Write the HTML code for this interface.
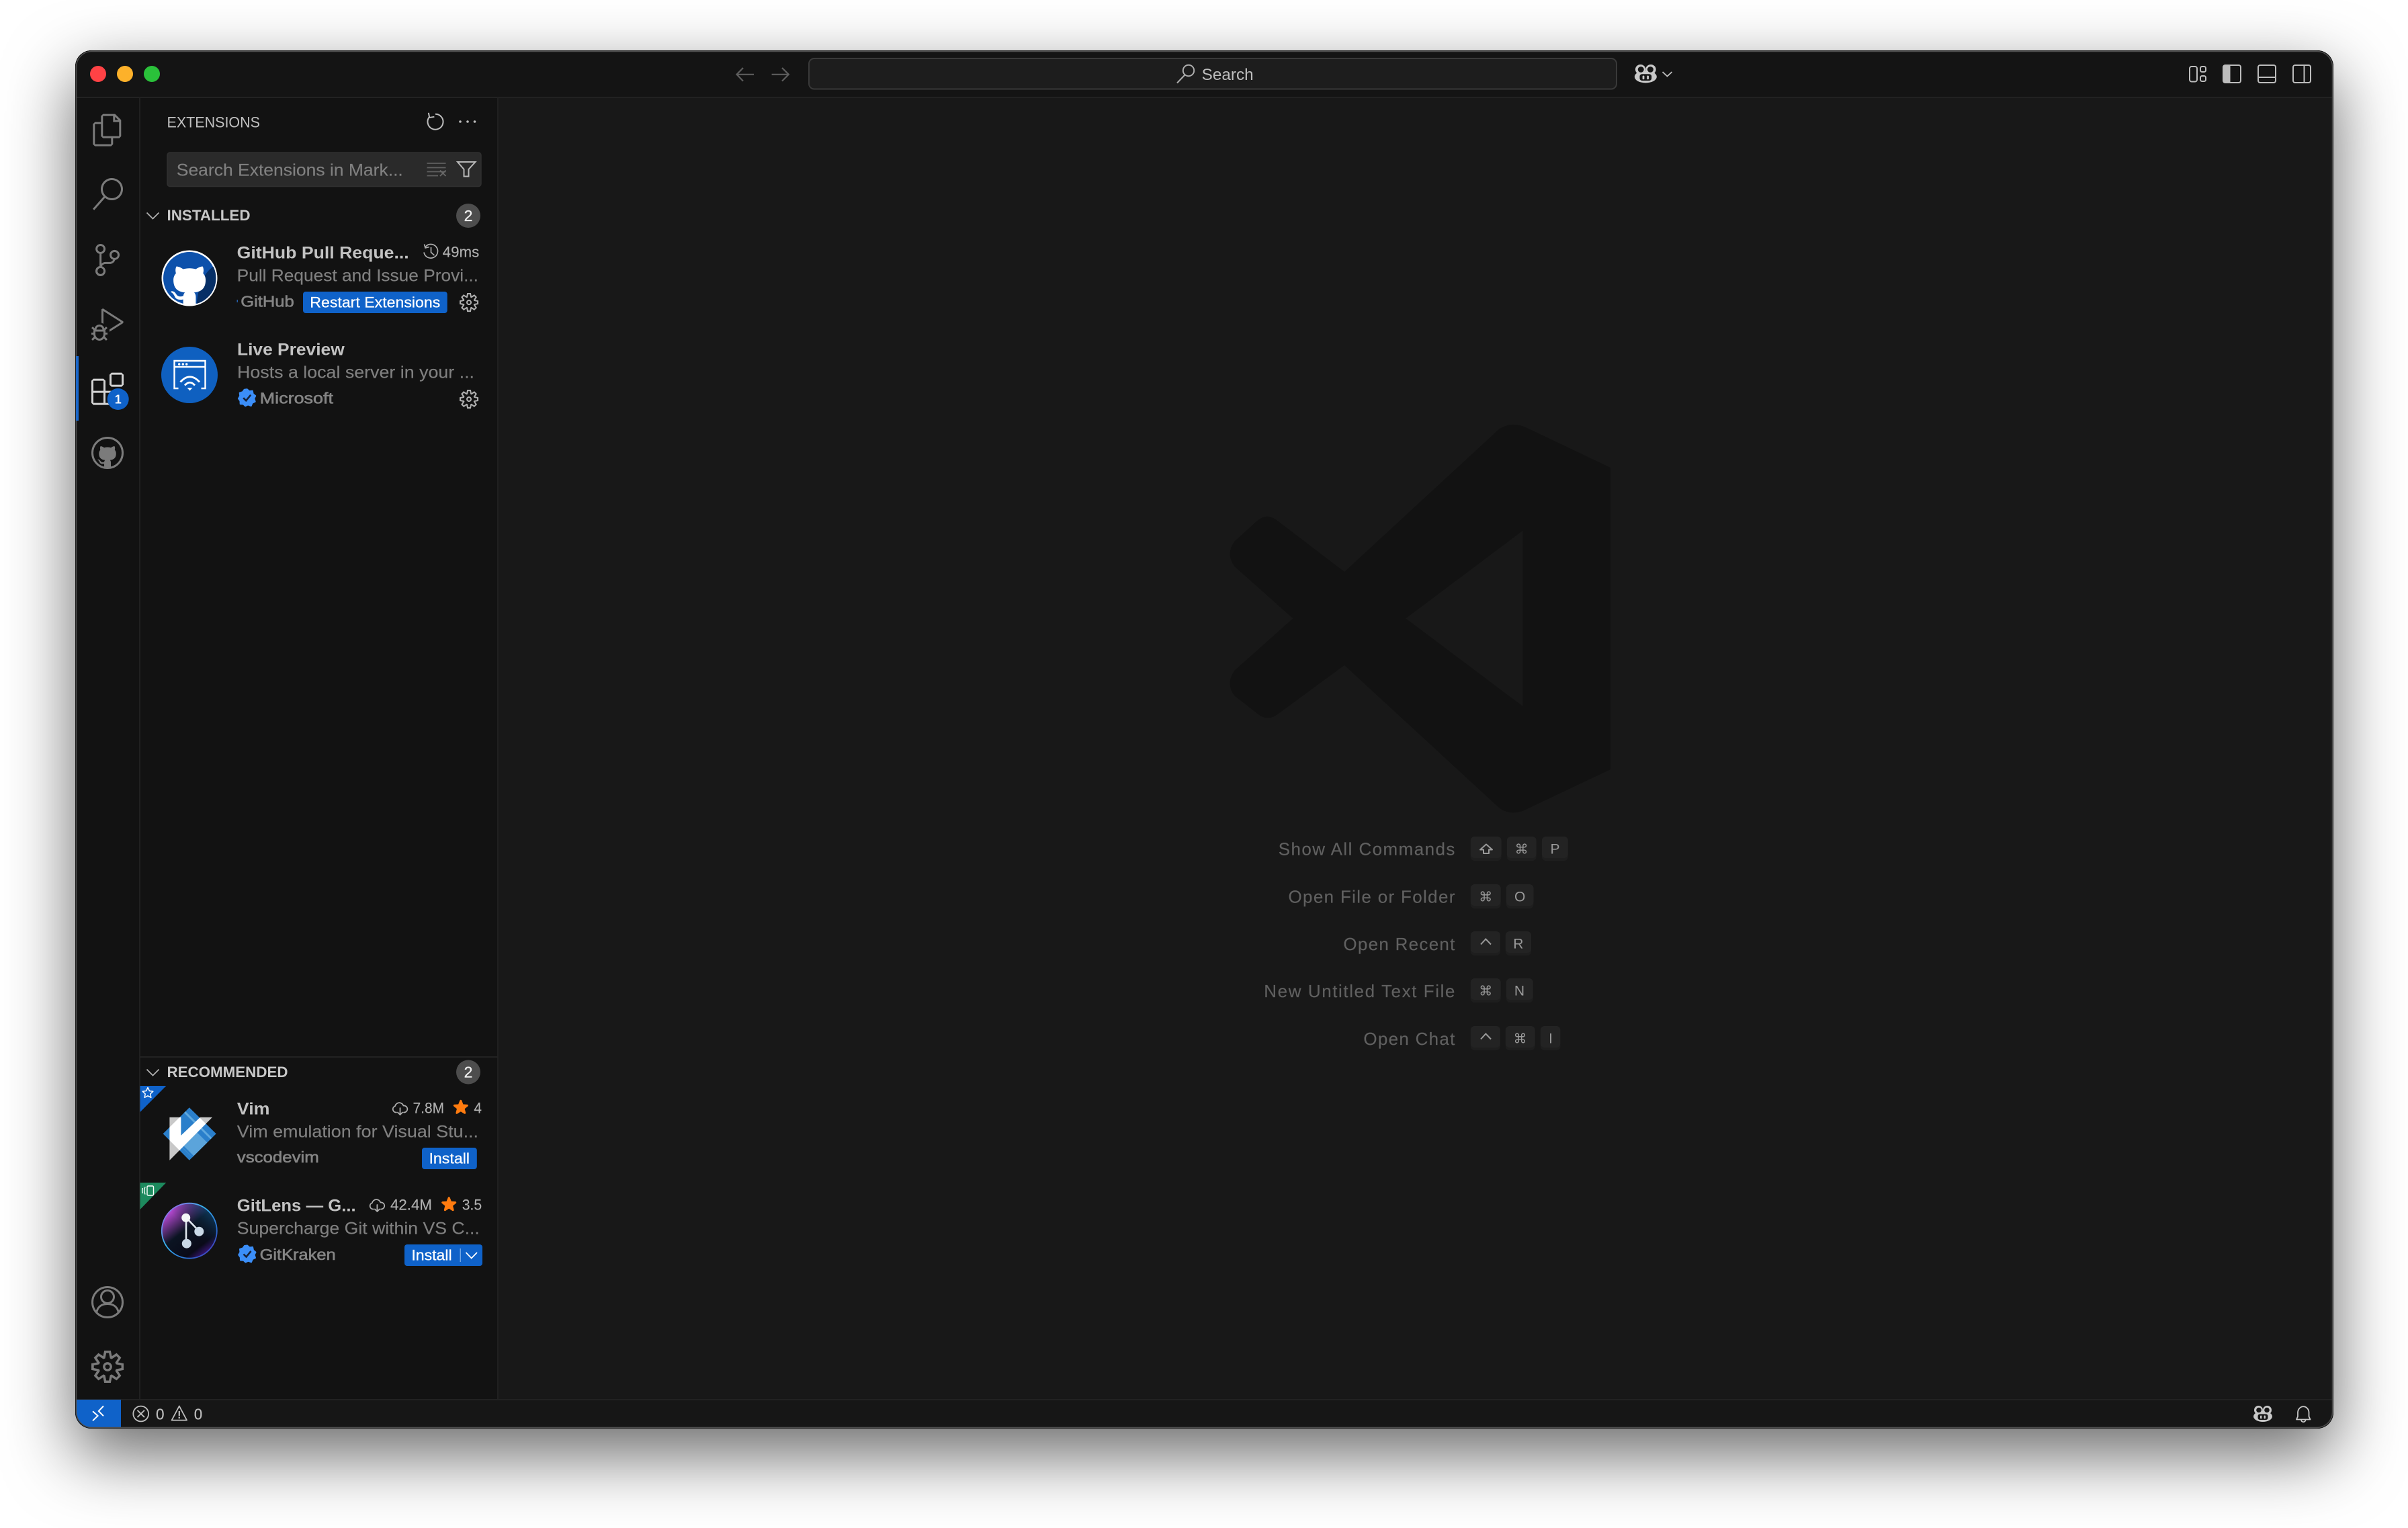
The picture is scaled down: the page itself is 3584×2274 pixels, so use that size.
<!DOCTYPE html>
<html lang="en">
<head>
<meta charset="utf-8">
<title>Visual Studio Code</title>
<style>
html,body{margin:0;padding:0;background:#fff;width:3584px;height:2274px;overflow:hidden}
#sh{position:absolute;left:112px;top:75px;width:3361px;height:2051px;border-radius:24px;box-shadow:0 38px 100px 2px rgba(0,0,0,.58)}
svg{position:absolute;left:0;top:0}
text{font-family:"Liberation Sans",sans-serif;white-space:pre}
.t{font-size:25px;font-weight:700;fill:#c2c2c2}
.d{font-size:25px;fill:#808080;stroke:#808080;stroke-width:.15}
.a{font-size:23px;fill:#858585;stroke:#858585;stroke-width:.6}
.m{font-size:22px;fill:#b0b0b0;stroke:#b0b0b0;stroke-width:.15}
.b{font-size:22px;fill:#fff;stroke:#fff;stroke-width:.25}
.h{font-size:22px;font-weight:700;fill:#c8c8c8}
.l{font-size:26px;fill:#606060;stroke:#606060;stroke-width:.15}
.k{font-size:21px;fill:#9a9a9a;text-anchor:middle}
.c{font-family:"DejaVu Sans",sans-serif;font-size:20px;fill:#9a9a9a;text-anchor:middle}
</style>
</head>
<body>
<div id="sh"></div>
<svg width="3584" height="2274" viewBox="0 0 3584 2274" xmlns="http://www.w3.org/2000/svg">
<defs>
<clipPath id="win"><rect x="112" y="75" width="3361" height="2051" rx="24"/></clipPath>
<clipPath id="gh"><circle cx="282" cy="414" r="39.5"/></clipPath>
<clipPath id="gh2"><circle cx="160" cy="675" r="22.5"/></clipPath>
<clipPath id="dia"><polygon points="281.8,1648.3 321.7,1687.3 281.8,1726.7 242.6,1687.3"/></clipPath>
<linearGradient id="gl" x1="0.15" y1="0.05" x2="0.85" y2="0.95"><stop offset="0" stop-color="#d552f2"/><stop offset=".45" stop-color="#0b1422"/><stop offset=".8" stop-color="#0a0a18"/><stop offset="1" stop-color="#4a1a9a"/></linearGradient>
<linearGradient id="gl2" x1="1" y1="0" x2="0" y2="1"><stop offset="0" stop-color="#0e5f96" stop-opacity=".9"/><stop offset=".5" stop-color="#0a1420" stop-opacity="0"/></linearGradient>
<linearGradient id="glr" x1="0" y1="0" x2="1" y2="1"><stop offset="0" stop-color="#b050e0"/><stop offset=".4" stop-color="#38b6f0"/><stop offset=".75" stop-color="#2a6ad0"/><stop offset="1" stop-color="#5a20b0"/></linearGradient>
<path id="cat" d="M6.02 16v-.79c0-.19-.01-.82-.01-1.49-2.01.37-2.53-.49-2.69-.94-.09-.23-.48-.94-.82-1.13-.28-.15-.68-.52-.01-.53.63-.01 1.08.58 1.23.82.72 1.21 1.87.87 2.33.66.07-.52.28-.87.51-1.07-1.78-.2-3.64-.89-3.64-3.95 0-.87.31-1.59.82-2.15-.08-.2-.36-1.02.08-2.12 0 0 .67-.21 2.2.82.64-.18 1.32-.27 2-.27.68 0 1.36.09 2 .27 1.53-1.04 2.2-.82 2.2-.82.44 1.1.16 1.92.08 2.12.51.56.82 1.27.82 2.15 0 3.07-1.87 3.75-3.65 3.95.29.25.54.73.54 1.48 0 1.07-.01 1.93-.01 2.2V16z"/>
<path id="gear" fill-rule="evenodd" d="M19.85 8.75l4.15.83v4.84l-4.15.83 2.35 3.52-3.43 3.43-3.52-2.35-.83 4.15H9.58l-.83-4.15-3.52 2.35-3.43-3.43 2.35-3.52L0 14.42V9.58l4.15-.83L1.8 5.23 5.23 1.8l3.52 2.35L9.58 0h4.84l.83 4.15 3.52-2.35 3.43 3.43-2.35 3.52zm-1.57 5.07l4-.81v-2l-4-.81-.54-1.3 2.29-3.43-1.43-1.43-3.43 2.29-1.3-.54-.81-4h-2l-.81 4-1.3.54-3.43-2.29-1.43 1.43L6.38 8.9l-.54 1.3-4 .81v2l4 .81.54 1.3-2.29 3.43 1.43 1.43 3.43-2.29 1.3.54.81 4h2l.81-4 1.3-.54 3.43 2.29 1.43-1.43-2.29-3.43.54-1.3zm-8.186-4.672A3.43 3.43 0 0 1 12 8.57 3.44 3.44 0 0 1 15.43 12a3.43 3.43 0 1 1-5.336-2.852zm.956 4.274c.281.188.612.288.95.288A1.7 1.7 0 0 0 13.71 12a1.71 1.71 0 1 0-2.66 1.422z"/>
<g id="cloud" fill="none" stroke="#adadad" stroke-width="1.8" stroke-linecap="round" stroke-linejoin="round"><path d="M-5.5 5.5H-6.5A4.8 4.8 0 0 1 -7.5 -3.8A6.5 6.5 0 0 1 5 -4.5A5 5 0 0 1 6.5 5.5H5.5"/><path d="M0 -1V9M-3.5 5.5L0 9L3.5 5.5"/></g>
<polygon id="star" fill="#ff7b0f" stroke="#ff7b0f" stroke-width="3" stroke-linejoin="round" points="0,-10 2.6,-3.4 9.5,-3.1 4.2,1.3 5.9,8 0,4.2 -5.9,8 -4.2,1.3 -9.5,-3.1 -2.6,-3.4"/>
<g id="ver"><polygon fill="#3b8ef8" stroke="#3b8ef8" stroke-width="2" stroke-linejoin="round" points="0,-12.5 3.4,-9.5 8,-10 9,-5.3 12.5,-2.5 10.5,1.5 12,6 7.8,8 6,12.3 1.5,10.7 -2.5,12.5 -5.5,9.8 -10,9.5 -10.2,5 -12.8,1.5 -10.5,-2.5 -11,-7 -6.5,-8.5 -4,-12"/><path d="M-5.5 .5L-1.5 4.5L5.5 -4" fill="none" stroke="#16233a" stroke-width="2.6"/></g>
<g id="cp"><ellipse cx="14" cy="16" rx="14" ry="8" fill="#c8c8c8"/><rect x="1" y="0" width="13" height="13" rx="6.5" fill="#c8c8c8"/><rect x="14" y="0" width="13" height="13" rx="6.5" fill="#c8c8c8"/><circle cx="8" cy="6.5" r="3.8" fill="#161616"/><circle cx="20" cy="6.5" r="3.8" fill="#161616"/><rect x="6.5" y="12.5" width="15" height="8.5" rx="3" fill="#161616"/><rect x="10" y="14.5" width="2.4" height="5" rx="1.2" fill="#c8c8c8"/><rect x="15.6" y="14.5" width="2.4" height="5" rx="1.2" fill="#c8c8c8"/></g>
</defs>

<g clip-path="url(#win)">
<rect x="112" y="75" width="3361" height="2051" fill="#181818"/>
<rect x="112" y="75" width="3361" height="70" fill="#141414"/>
<rect x="112" y="145" width="96" height="1938" fill="#121212"/>
<rect x="208" y="145" width="533" height="1938" fill="#121212"/>
<rect x="112" y="2083" width="3361" height="43" fill="#161616"/>
<rect x="112" y="144" width="3361" height="2" fill="#222"/>
<rect x="207" y="145" width="2" height="1938" fill="#202020"/>
<rect x="740" y="145" width="2" height="1938" fill="#202020"/>
<rect x="208" y="1572" width="533" height="2" fill="#222"/>
<rect x="112" y="2082" width="3361" height="2" fill="#222"/>
<rect x="112" y="2083" width="68" height="43" fill="#0f62c9"/>
</g>
<rect x="112.5" y="75.5" width="3360" height="2050" rx="24" fill="none" stroke="#0a0a0a" stroke-width="1"/>
<rect x="113.5" y="76.5" width="3358" height="2048" rx="23" fill="none" stroke="#4c4c4c" stroke-width="1.5"/>

<!-- traffic lights -->
<circle cx="146" cy="110" r="12" fill="#ff4245"/>
<circle cx="186" cy="110" r="12" fill="#fdb12a"/>
<circle cx="226" cy="110" r="12" fill="#2ac13a"/>

<!-- nav -->
<g fill="none" stroke="#5e5e5e" stroke-width="2.2">
<path d="M1122 110.8H1097M1106 101L1096.5 110.8L1106 120.6"/>
<path d="M1148.6 110.8H1173.5M1164 101L1173.8 110.8L1164 120.6"/>
</g>
<rect x="1204" y="87" width="1202" height="45.5" rx="8" fill="#1d1d1d" stroke="#393939" stroke-width="2"/>
<g fill="none" stroke="#adadad" stroke-width="2"><circle cx="1769" cy="105" r="8.2"/><path d="M1763.5 111.5L1752 123.5"/></g>
<text x="1788.7" y="119" font-size="24" fill="#bdbdbd" textLength="77" lengthAdjust="spacingAndGlyphs">Search</text>
<use href="#cp" transform="translate(2432.8,96) scale(1.18,1.14)"/>
<path d="M2474.5 107L2481.5 113.5L2488.5 107" fill="none" stroke="#c0c0c0" stroke-width="1.8"/>
<g fill="none" stroke="#bdbdbd" stroke-width="2">
<rect x="3259" y="99" width="11" height="22.5" rx="3"/>
<rect x="3275" y="99" width="8" height="8" rx="2.5"/>
<rect x="3275" y="113" width="8" height="8" rx="2.5"/>
<rect x="3309" y="97" width="26" height="26" rx="3"/>
<rect x="3361" y="97" width="26" height="26" rx="3"/>
<path d="M3361 115H3387"/>
<rect x="3413" y="97" width="26" height="26" rx="3"/>
<path d="M3429.5 97V123"/>
</g>
<path d="M3319.5 97H3312a3 3 0 0 0-3 3v20a3 3 0 0 0 3 3h7.5z" fill="#bdbdbd"/>

<!-- activity bar -->
<g fill="#7b7b7b">
<path transform="translate(136.3,169.6) scale(2)" fill-rule="evenodd" d="M17.5 0h-9L7 1.5V6H2.5L1 7.5v15.07L2.5 24h12.07L16 22.57V18h4.7l1.3-1.43V4.5L17.5 0zm0 2.12l2.38 2.38H17.5V2.12zm-3 20.38h-12v-15H7v9.07L8.5 18h6v4.5zm6-6h-12v-15H16V6h4.5v10.5z"/>
<path transform="translate(136,265) scale(2)" d="M15.25 0a8.25 8.25 0 0 0-6.18 13.72L1 22.88l1.12 1 8.05-9.12A8.251 8.251 0 1 0 15.25.01V0zm0 15a6.75 6.75 0 1 1 0-13.5 6.75 6.75 0 0 1 0 13.5z"/>
<path transform="translate(136,363) scale(2)" d="M21.007 8.222A3.738 3.738 0 0 0 15.045 5.2a3.737 3.737 0 0 0 1.156 6.583 2.988 2.988 0 0 1-2.668 1.67h-2.99a4.456 4.456 0 0 0-2.989 1.165V7.4a3.737 3.737 0 1 0-1.494 0v9.117a3.776 3.776 0 1 0 1.816.099 2.99 2.99 0 0 1 2.668-1.667h2.99a4.484 4.484 0 0 0 4.223-3.039 3.736 3.736 0 0 0 3.25-3.687zM4.565 3.738a2.242 2.242 0 1 1 4.484 0 2.242 2.242 0 0 1-4.484 0zm4.484 16.441a2.242 2.242 0 1 1-4.484 0 2.242 2.242 0 0 1 4.484 0zm8.221-9.715a2.242 2.242 0 1 1 0-4.485 2.242 2.242 0 0 1 0 4.485z"/>
<path transform="translate(136,459) scale(2)" d="M10.94 13.5l-1.32 1.32a3.73 3.73 0 0 0-7.24 0L1.06 13.5 0 14.56l1.72 1.72-.22.22V18H0v1.5h1.5v.08c.077.489.214.966.41 1.42L0 22.94 1.06 24l1.65-1.65A4.308 4.308 0 0 0 6 24a4.31 4.31 0 0 0 3.29-1.65L10.94 24 12 22.94 10.09 21c.198-.464.336-.951.41-1.45v-.1H12V18h-1.5v-1.5l-.22-.22L12 14.56l-1.06-1.06zM6 13.5a2.25 2.25 0 0 1 2.25 2.25h-4.5A2.25 2.25 0 0 1 6 13.5zm3 6a3.33 3.33 0 0 1-3 3 3.33 3.33 0 0 1-3-3v-2.25h6v2.25zm14.76-9.9v1.26L13.5 17.37v-1.76l8.5-5.37L9 2v9.46a5.07 5.07 0 0 0-1.5-.72V.63L8.64 0l15.12 9.6z"/>
</g>
<rect x="113" y="530" width="4" height="96" fill="#1a66c9"/>
<path transform="translate(136,554.6) scale(2)" fill="#d4d4d4" d="M13.5 1.5L15 0h7.5L24 1.5V9l-1.5 1.5H15L13.5 9V1.5zm1.5 0V9h7.5V1.5H15zM0 15V6l1.5-1.5H9L10.5 6v7.5H18l1.5 1.5v7.5L18 24H1.5L0 22.5V15zm9-1.5V6H1.5v7.5H9zM9 15H1.5v7.5H9V15zm1.5 7.5H18V15h-7.5v7.5z"/>
<circle cx="175.7" cy="594" r="16" fill="#0f62c9"/>
<text x="175.7" y="600.5" font-size="18" font-weight="700" fill="#fff" text-anchor="middle">1</text>
<circle cx="160" cy="674" r="22.5" fill="none" stroke="#7b7b7b" stroke-width="3"/>
<g clip-path="url(#gh2)"><use href="#cat" transform="translate(140,655.9) scale(2.5)" fill="#7b7b7b"/></g>

<circle cx="160" cy="1938" r="22.5" fill="none" stroke="#7b7b7b" stroke-width="3"/>
<circle cx="160" cy="1930" r="9.5" fill="none" stroke="#7b7b7b" stroke-width="3"/>
<path d="M143.5 1954C145 1945 151 1940.5 160 1940.5S175 1945 176.5 1954" fill="none" stroke="#7b7b7b" stroke-width="3"/>
<use href="#gear" transform="translate(136,2010) scale(2)" fill="#7b7b7b"/>

<!-- sidebar head -->
<text x="248.5" y="189.5" font-size="22" fill="#c0c0c0" textLength="138.5" lengthAdjust="spacingAndGlyphs">EXTENSIONS</text>
<g fill="none" stroke="#bdbdbd" stroke-width="2"><path d="M648 169.7A11.5 11.5 0 1 1 639.2 173.8"/><path d="M637.8 167.8L639.2 175L646.4 173.8"/></g>
<g fill="#bdbdbd"><circle cx="685" cy="181" r="1.8"/><circle cx="696" cy="181" r="1.8"/><circle cx="706.5" cy="181" r="1.8"/></g>
<rect x="249" y="227" width="467" height="50.5" rx="4" fill="#2a2a2a" stroke="#303030" stroke-width="1.5"/>
<text x="262.8" y="261.5" font-size="25" fill="#808080" stroke="#808080" stroke-width=".15" textLength="337" lengthAdjust="spacingAndGlyphs">Search Extensions in Mark...</text>
<g fill="none" stroke="#606060" stroke-width="1.8">
<path d="M635.5 243H663.5M635.5 249.5H663.5M635.5 255.5H663.5M635.5 261.5H652"/>
<path d="M655 253.5L663.5 262M663.5 253.5L655 262" stroke="#686868"/>
</g>
<path d="M681 241H707.5L697.5 252V262.5H690.5V252Z" fill="none" stroke="#b8b8b8" stroke-width="2"/>

<!-- installed -->
<path d="M218.5 316.5L227.5 325.5L236.5 316.5" fill="none" stroke="#b0b0b0" stroke-width="1.8"/>
<text x="248.5" y="328" class="h" textLength="124" lengthAdjust="spacingAndGlyphs">INSTALLED</text>
<circle cx="697" cy="321" r="18" fill="#4d4d4d"/>
<text x="697" y="329" font-size="23" fill="#f0f0f0" stroke="#f0f0f0" stroke-width=".3" text-anchor="middle">2</text>

<!-- GitHub PR item -->
<circle cx="282" cy="414" r="41.5" fill="#fff"/>
<circle cx="282" cy="414" r="39" fill="#0d51ab"/>
<g clip-path="url(#gh)"><path d="M322 394C305 403 296 420 292 456H325Z" fill="#062f66"/><use href="#cat" transform="translate(244.4,381.1) scale(4.7)" fill="#fff"/></g>
<text x="352.7" y="384.3" class="t" textLength="256" lengthAdjust="spacingAndGlyphs">GitHub Pull Reque...</text>
<g fill="none" stroke="#adadad" stroke-width="1.7"><path d="M633 367.5A10.3 10.3 0 1 1 631 375.5"/><path d="M631.5 363.5L633 369L638.8 367.6M641.5 368V375.5L646.5 380"/></g>
<text x="658.7" y="382.7" class="m" textLength="54.6" lengthAdjust="spacingAndGlyphs">49ms</text>
<text x="352.7" y="418.7" class="d" textLength="359.3" lengthAdjust="spacingAndGlyphs">Pull Request and Issue Provi...</text>
<rect x="352.6" y="446" width="1.2" height="4" fill="#2a72d0"/>
<text x="358.3" y="456.7" class="a" textLength="79.4" lengthAdjust="spacingAndGlyphs">GitHub</text>
<rect x="451" y="434" width="214.7" height="32" rx="4" fill="#0f62c9"/>
<text x="461.3" y="457.7" class="b" textLength="194" lengthAdjust="spacingAndGlyphs">Restart Extensions</text>
<use href="#gear" transform="translate(684,436) scale(1.17)" fill="#b0b0b0"/>

<!-- Live preview -->
<circle cx="282" cy="558" r="42" fill="#0f60c0"/>
<g fill="none" stroke="#fff" stroke-width="2.4">
<path d="M265.5 578H259.5V537H305.5V578H299.5M259.5 546H305.5"/>
<path d="M268.5 568.5Q282.5 553 297 568.5" stroke-width="2.8"/>
<path d="M275 573.5Q282.5 565 290 573.5" stroke-width="2.8"/>
</g>
<g fill="#fff"><circle cx="266.7" cy="542" r="1.7"/><circle cx="272.3" cy="542" r="1.7"/><circle cx="277.7" cy="542" r="1.7"/><path d="M278.5 577H286.5L282.5 581.5Z"/></g>
<text x="353" y="528.3" class="t" textLength="159.7" lengthAdjust="spacingAndGlyphs">Live Preview</text>
<text x="353" y="562.7" class="d" textLength="353" lengthAdjust="spacingAndGlyphs">Hosts a local server in your ...</text>
<use href="#ver" transform="translate(367.7,591.7)"/>
<text x="386.7" y="600.7" class="a" textLength="109.3" lengthAdjust="spacingAndGlyphs">Microsoft</text>
<use href="#gear" transform="translate(684,580) scale(1.17)" fill="#b0b0b0"/>

<!-- recommended -->
<path d="M218.5 1591.5L227.5 1600.5L236.5 1591.5" fill="none" stroke="#b0b0b0" stroke-width="1.8"/>
<text x="248.5" y="1602.8" class="h" textLength="180" lengthAdjust="spacingAndGlyphs">RECOMMENDED</text>
<circle cx="697" cy="1595.5" r="18" fill="#4d4d4d"/>
<text x="697" y="1603.5" font-size="23" fill="#f0f0f0" stroke="#f0f0f0" stroke-width=".3" text-anchor="middle">2</text>

<!-- Vim -->
<polygon points="208.5,1616 247.3,1616 208.5,1655" fill="#0f62c9"/>
<polygon points="220,1618.5 222.4,1623.5 227.8,1624.2 223.8,1628 224.8,1633.4 220,1630.8 215.2,1633.4 216.2,1628 212.2,1624.2 217.6,1623.5" fill="none" stroke="#fff" stroke-width="1.5" stroke-linejoin="round"/>
<polygon points="281.8,1648.3 321.7,1687.3 281.8,1726.7 242.6,1687.3" fill="#2a7fcb"/>
<g clip-path="url(#dia)">
<path d="M268 1648L320 1700" stroke="#5fa8de" stroke-width="3" fill="none"/>
<polygon points="290,1682 320,1712 294,1730 263,1700" fill="#5ba4db"/>
<path d="M268 1702L297 1731" stroke="#2a7fcb" stroke-width="3" fill="none"/>
</g>
<polygon points="252.4,1662.7 269.3,1662.7 269.3,1690 298,1662.7 316,1662.7 252.4,1726.7" fill="#c8c8c8"/>
<polygon clip-path="url(#dia)" points="252.4,1662.7 269.3,1662.7 269.3,1690 298,1662.7 316,1662.7 252.4,1726.7" fill="#fff"/>
<text x="352.8" y="1658.3" class="t" textLength="48.7" lengthAdjust="spacingAndGlyphs">Vim</text>
<use href="#cloud" transform="translate(595.5,1650)"/>
<text x="614.5" y="1656.7" class="m" textLength="46.5" lengthAdjust="spacingAndGlyphs">7.8M</text>
<use href="#star" transform="translate(685.8,1648.3)"/>
<text x="705.4" y="1656.7" class="m" textLength="11.6" lengthAdjust="spacingAndGlyphs">4</text>
<text x="352.8" y="1692.3" class="d" textLength="359.2" lengthAdjust="spacingAndGlyphs">Vim emulation for Visual Stu...</text>
<text x="352.8" y="1730" class="a" textLength="122" lengthAdjust="spacingAndGlyphs">vscodevim</text>
<rect x="628" y="1708" width="81.8" height="32" rx="4" fill="#0f62c9"/>
<text x="638.5" y="1731.7" class="b" textLength="60.5" lengthAdjust="spacingAndGlyphs">Install</text>

<!-- GitLens -->
<polygon points="208.5,1760 247.3,1760 208.5,1800" fill="#1d8a5e"/>
<g fill="none" stroke="#fff" stroke-width="1.4"><rect x="219" y="1765" width="9.5" height="14" rx="1.5"/><path d="M216 1766.5Q213.5 1772 216 1777.5M212.5 1768Q210.8 1772 212.5 1776"/></g>
<circle cx="281.8" cy="1831.7" r="41" fill="url(#gl)"/>
<circle cx="281.8" cy="1831.7" r="41" fill="url(#gl2)"/>
<circle cx="281.8" cy="1831.7" r="41" fill="none" stroke="url(#glr)" stroke-width="1.8"/>
<path d="M277 1812V1851M277 1812L296 1832" stroke="#dfe7ee" stroke-width="2.6" fill="none"/>
<circle cx="276.7" cy="1812.3" r="6.5" fill="#f4f6f8"/>
<circle cx="296.3" cy="1832.7" r="7" fill="#c9d8e6"/>
<circle cx="277.8" cy="1850.7" r="7" fill="#c9d8e6"/>
<text x="352.8" y="1802.7" class="t" textLength="176.8" lengthAdjust="spacingAndGlyphs">GitLens — G...</text>
<use href="#cloud" transform="translate(561.4,1794)"/>
<text x="581" y="1800.7" class="m" textLength="61.9" lengthAdjust="spacingAndGlyphs">42.4M</text>
<use href="#star" transform="translate(668.2,1792.7)"/>
<text x="687.8" y="1800.7" class="m" textLength="29.4" lengthAdjust="spacingAndGlyphs">3.5</text>
<text x="352.8" y="1836.7" class="d" textLength="361" lengthAdjust="spacingAndGlyphs">Supercharge Git within VS C...</text>
<use href="#ver" transform="translate(368,1866)"/>
<text x="386.6" y="1875" class="a" textLength="113" lengthAdjust="spacingAndGlyphs">GitKraken</text>
<rect x="602" y="1852" width="116" height="32" rx="4" fill="#0f62c9"/>
<text x="612.4" y="1875.7" class="b" textLength="60.2" lengthAdjust="spacingAndGlyphs">Install</text>
<rect x="684.5" y="1858" width="1.5" height="20" fill="#6fa4e4"/>
<path d="M693.5 1864L701.7 1872.5L710 1864" fill="none" stroke="#fff" stroke-width="1.8"/>

<!-- status bar -->
<path d="M138 2100.3L145.6 2107L138 2114.3M154 2092.5L146.8 2100L154 2107.3" fill="none" stroke="#fff" stroke-width="2"/>
<g fill="none" stroke="#bdbdbd" stroke-width="1.8">
<circle cx="209.7" cy="2104" r="11.4"/>
<path d="M204.5 2098.8L215 2109.2M215 2098.8L204.5 2109.2"/>
<path d="M266.8 2092.5L278 2113.6H255.6Z" stroke-linejoin="round"/>
<path d="M266.8 2100V2107" stroke-width="2.2"/>
<path d="M266.8 2108.5V2111" stroke-width="2.4"/>
</g>
<text x="232" y="2112.7" font-size="23" fill="#bdbdbd" stroke="#bdbdbd" stroke-width=".2" textLength="12.5" lengthAdjust="spacingAndGlyphs">0</text>
<text x="288.7" y="2112.7" font-size="23" fill="#bdbdbd" stroke="#bdbdbd" stroke-width=".2" textLength="12.5" lengthAdjust="spacingAndGlyphs">0</text>
<use href="#cp" transform="translate(3354,2092)"/>
<g fill="none" stroke="#c8c8c8" stroke-width="1.8" stroke-linejoin="round">
<path d="M3418 2112.5H3438.5L3436.5 2108V2101.5A8.3 9.3 0 0 0 3420 2101.5V2108Z"/>
<path d="M3425 2113A3.2 3.2 0 0 0 3431.5 2113"/>
</g>

<!-- watermark -->
<path fill="#121212" fill-rule="evenodd" d="M2397 696L2272.6 636.7Q2250 626 2231 638.8L2001 851L1899.5 773.5Q1885 763 1870.5 775.5L1837.3 806Q1824 824 1837.3 842.9L1924.4 920.4L1837.3 998Q1824 1017 1837 1035L1872.6 1063Q1887 1074 1901.6 1063L2001 990L2231 1202Q2250 1216 2272.6 1204L2397 1145ZM2266.4 789.8L2092.3 920.4L2266.4 1051Z"/>

<!-- shortcuts -->
<text x="1902.7" y="1272.7" class="l" textLength="262.7" lengthAdjust="spacing">Show All Commands</text>
<text x="1917.5" y="1343.3" class="l" textLength="247.9" lengthAdjust="spacing">Open File or Folder</text>
<text x="1999.4" y="1414" class="l" textLength="166" lengthAdjust="spacing">Open Recent</text>
<text x="1881.3" y="1484" class="l" textLength="284.1" lengthAdjust="spacing">New Untitled Text File</text>
<text x="2029.4" y="1555" class="l" textLength="136" lengthAdjust="spacing">Open Chat</text>

<g fill="#1e1e1e">
<rect x="2188.8" y="1245" width="45.8" height="36" rx="6"/><rect x="2242.9" y="1245" width="43.7" height="36" rx="6"/><rect x="2294.9" y="1245" width="38.9" height="36" rx="6"/>
<rect x="2188.8" y="1316" width="44.8" height="36" rx="6"/><rect x="2241.9" y="1316" width="40.6" height="36" rx="6"/>
<rect x="2188.8" y="1386" width="44.1" height="36" rx="6"/><rect x="2240.8" y="1386" width="38.2" height="36" rx="6"/>
<rect x="2188.8" y="1456" width="44.8" height="36" rx="6"/><rect x="2241.9" y="1456" width="39.9" height="36" rx="6"/>
<rect x="2188.8" y="1527" width="44.1" height="36" rx="6"/><rect x="2240.8" y="1527" width="43.8" height="36" rx="6"/><rect x="2292.8" y="1527" width="29.6" height="36" rx="6"/>
</g>
<g fill="#232323">
<rect x="2188.8" y="1245" width="45.8" height="32" rx="6"/><rect x="2242.9" y="1245" width="43.7" height="32" rx="6"/><rect x="2294.9" y="1245" width="38.9" height="32" rx="6"/>
<rect x="2188.8" y="1316" width="44.8" height="32" rx="6"/><rect x="2241.9" y="1316" width="40.6" height="32" rx="6"/>
<rect x="2188.8" y="1386" width="44.1" height="32" rx="6"/><rect x="2240.8" y="1386" width="38.2" height="32" rx="6"/>
<rect x="2188.8" y="1456" width="44.8" height="32" rx="6"/><rect x="2241.9" y="1456" width="39.9" height="32" rx="6"/>
<rect x="2188.8" y="1527" width="44.1" height="32" rx="6"/><rect x="2240.8" y="1527" width="43.8" height="32" rx="6"/><rect x="2292.8" y="1527" width="29.6" height="32" rx="6"/>
</g>
<path d="M2212 1256.5L2221 1264.5H2216V1270H2208V1264.5H2203Z" fill="none" stroke="#9a9a9a" stroke-width="2" stroke-linejoin="round"/>
<text x="2264.6" y="1270.5" class="c">⌘</text>
<text x="2314.5" y="1270.5" class="k">P</text>
<text x="2211.2" y="1341.5" class="c">⌘</text>
<text x="2262.2" y="1341.5" class="k">O</text>
<path d="M2204 1405.5L2211.4 1397.5L2219 1405.5" fill="none" stroke="#9a9a9a" stroke-width="2"/>
<text x="2259.8" y="1411.5" class="k">R</text>
<text x="2211.2" y="1481.5" class="c">⌘</text>
<text x="2261.5" y="1481.5" class="k">N</text>
<path d="M2204 1546.5L2211.4 1538.5L2219 1546.5" fill="none" stroke="#9a9a9a" stroke-width="2"/>
<text x="2262.5" y="1552.5" class="c">⌘</text>
<text x="2308" y="1552.5" class="k">I</text>
</svg>
</body>
</html>
